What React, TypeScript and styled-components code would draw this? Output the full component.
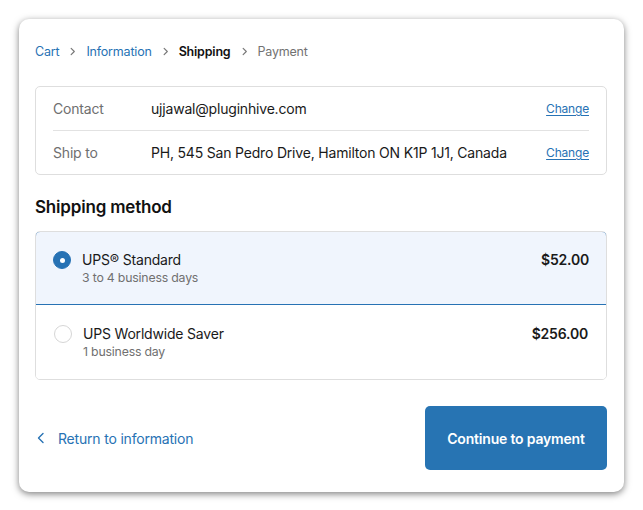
import React from "react";
import styled, { createGlobalStyle } from "styled-components";

const GlobalStyle = createGlobalStyle`
  html, body {
    margin: 0;
    padding: 0;
    background: #ffffff;
  }
  body {
    font-family: Inter, "Helvetica Neue", Arial, sans-serif;
    color: #1a1a1a;
    letter-spacing: -0.012em;
    -webkit-font-smoothing: antialiased;
  }
  * {
    box-sizing: border-box;
  }
`;

const BLUE = "#2772b4";

const Page = styled.div`
  padding: 19px;
`;

const Card = styled.div`
  width: 605px;
  height: 473px;
  background: #ffffff;
  border-radius: 10px;
  box-shadow: 0 2px 7px rgba(0, 0, 0, 0.5);
  padding: 24px 17px 22px 16px;
  display: flex;
  flex-direction: column;
`;

const Breadcrumb = styled.nav`
  display: flex;
  align-items: center;
  gap: 9px;
  height: 16px;
  font-size: 12.5px;
`;

const Crumb = styled.span<{ state: "link" | "current" | "next" }>`
  color: ${(p) =>
    p.state === "link" ? BLUE : p.state === "current" ? "#111111" : "#727272"};
  font-weight: ${(p) => (p.state === "current" ? 600 : 400)};
`;

const Chevron = ({ size = 9, color = "#777" }: { size?: number; color?: string }) => (
  <svg width={size} height={size} viewBox="0 0 10 10" fill="none">
    <path d="M3.5 1.5 7 5 3.5 8.5" stroke={color} strokeWidth="1.3" strokeLinecap="round" strokeLinejoin="round" />
  </svg>
);

const BackChevron = () => (
  <svg width="10" height="12" viewBox="0 0 10 12" fill="none">
    <path d="M7 1.5 2.5 6 7 10.5" stroke={BLUE} strokeWidth="1.4" strokeLinecap="round" strokeLinejoin="round" />
  </svg>
);

const InfoBox = styled.div`
  margin-top: 27px;
  border: 1px solid #dedede;
  border-radius: 5px;
  padding: 0 17px;
`;

const InfoRow = styled.div<{ last?: boolean }>`
  display: flex;
  align-items: center;
  height: ${(p) => (p.last ? "43px" : "44px")};
  border-bottom: ${(p) => (p.last ? "none" : "1px solid #e2e2e2")};
  font-size: 14px;
`;

const InfoLabel = styled.span`
  width: 98px;
  color: #6f6f6f;
  flex-shrink: 0;
`;

const InfoValue = styled.span`
  flex: 1;
  color: #1a1a1a;
`;

const ChangeLink = styled.a`
  font-size: 12px;
  color: ${BLUE};
  text-decoration: underline;
  text-underline-offset: 2px;
  cursor: pointer;
`;

const Heading = styled.h2`
  margin: 21px 0 13px;
  font-size: 17px;
  line-height: 22px;
  font-weight: 600;
  color: #111111;
`;

const Options = styled.div`
  border: 1px solid #dedede;
  border-radius: 5px;
  overflow: hidden;
`;

const Option = styled.label<{ selected?: boolean }>`
  display: flex;
  align-items: flex-start;
  height: 74px;
  padding: 19px 17px 0 17px;
  background: ${(p) => (p.selected ? "#f0f5fd" : "#ffffff")};
  border: 1px solid ${(p) => (p.selected ? BLUE : "transparent")};
  margin: ${(p) => (p.selected ? "-1px -1px 0" : "0")};
  border-radius: ${(p) => (p.selected ? "5px 5px 0 0" : "0")};
  cursor: pointer;
`;

const Radio = styled.span<{ checked?: boolean }>`
  width: 18px;
  height: 18px;
  border-radius: 50%;
  flex-shrink: 0;
  display: flex;
  align-items: center;
  justify-content: center;
  background: ${(p) => (p.checked ? BLUE : "#ffffff")};
  border: 1px solid ${(p) => (p.checked ? BLUE : "#d6d6d6")};
  &::after {
    content: "";
    width: 5px;
    height: 5px;
    border-radius: 50%;
    background: ${(p) => (p.checked ? "#ffffff" : "transparent")};
  }
`;

const OptionText = styled.div`
  flex: 1;
  margin-left: 11px;
  display: flex;
  flex-direction: column;
`;

const OptionTitle = styled.span`
  font-size: 14px;
  line-height: 18px;
  color: #1a1a1a;
`;

const OptionSub = styled.span`
  font-size: 12.3px;
  line-height: 18px;
  color: #707070;
`;

const Price = styled.span`
  font-size: 14px;
  line-height: 18px;
  font-weight: 600;
  color: #1a1a1a;
`;

const Footer = styled.div`
  margin-top: 26px;
  display: flex;
  align-items: center;
  justify-content: space-between;
`;

const BackLink = styled.a`
  display: flex;
  align-items: center;
  gap: 12px;
  font-size: 14px;
  color: ${BLUE};
  cursor: pointer;
  padding-left: 1px;
`;

const PrimaryButton = styled.button`
  width: 182px;
  height: 64px;
  border: none;
  border-radius: 5px;
  background: #2774b3;
  color: #ffffff;
  font-family: inherit;
  letter-spacing: inherit;
  font-size: 14px;
  font-weight: 600;
  cursor: pointer;
`;

const crumbs: { label: string; state: "link" | "current" | "next" }[] = [
  { label: "Cart", state: "link" },
  { label: "Information", state: "link" },
  { label: "Shipping", state: "current" },
  { label: "Payment", state: "next" },
];

const rates = [
  { name: "UPS® Standard", eta: "3 to 4 business days", price: "$52.00" },
  { name: "UPS Worldwide Saver", eta: "1 business day", price: "$256.00" },
];

export default function App() {
  const [selected, setSelected] = React.useState(0);

  return (
    <>
      <GlobalStyle />
      <Page>
        <Card>
          <Breadcrumb>
            {crumbs.map((c, i) => (
              <React.Fragment key={c.label}>
                {i > 0 && <Chevron />}
                <Crumb state={c.state}>{c.label}</Crumb>
              </React.Fragment>
            ))}
          </Breadcrumb>

          <InfoBox>
            <InfoRow>
              <InfoLabel>Contact</InfoLabel>
              <InfoValue>ujjawal@pluginhive.com</InfoValue>
              <ChangeLink>Change</ChangeLink>
            </InfoRow>
            <InfoRow last>
              <InfoLabel>Ship to</InfoLabel>
              <InfoValue>PH, 545 San Pedro Drive, Hamilton ON K1P 1J1, Canada</InfoValue>
              <ChangeLink>Change</ChangeLink>
            </InfoRow>
          </InfoBox>

          <Heading>Shipping method</Heading>

          <Options>
            {rates.map((r, i) => (
              <Option key={r.name} selected={selected === i} onClick={() => setSelected(i)}>
                <Radio checked={selected === i} />
                <OptionText>
                  <OptionTitle>{r.name}</OptionTitle>
                  <OptionSub>{r.eta}</OptionSub>
                </OptionText>
                <Price>{r.price}</Price>
              </Option>
            ))}
          </Options>

          <Footer>
            <BackLink>
              <BackChevron />
              Return to information
            </BackLink>
            <PrimaryButton>Continue to payment</PrimaryButton>
          </Footer>
        </Card>
      </Page>
    </>
  );
}
